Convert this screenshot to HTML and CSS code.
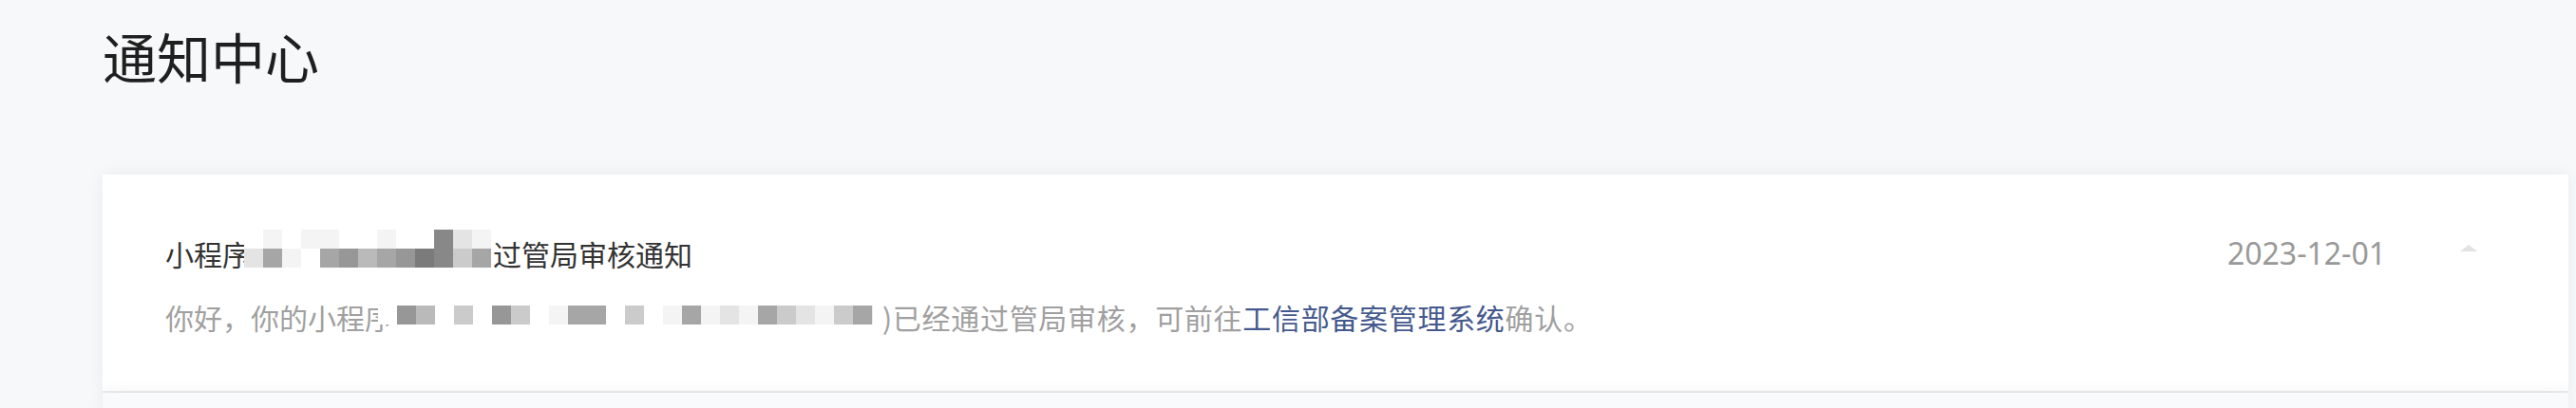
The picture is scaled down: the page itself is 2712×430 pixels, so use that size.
FILE: index.html
```html
<!DOCTYPE html>
<html lang="zh-CN">
<head>
<meta charset="utf-8">
<title>通知中心</title>
<link rel="stylesheet" href="styles.css">
</head>
<body>
<div class="page">
  <h1 class="page-title">通知中心</h1>
  <div class="list">
    <div class="card">
      <div class="card-head">
        <div class="card-title">小程序<span class="mosaic mosaic-title"><i class="g-f"></i><i class="g-e"></i><i class="g-f"></i><i class="g-e"></i><i class="g-e"></i><i class="g-f"></i><i class="g-f"></i><i class="g-e"></i><i class="g-f"></i><i class="g-f"></i><i class="g-8"></i><i class="g-d"></i><i class="g-e"></i><i class="g-d"></i><i class="g-a"></i><i class="g-e"></i><i class="g-f"></i><i class="g-a"></i><i class="g-9"></i><i class="g-b"></i><i class="g-a"></i><i class="g-9"></i><i class="g-7"></i><i class="g-8"></i><i class="g-c"></i><i class="g-a"></i></span>过管局审核通知</div>
        <div class="card-date">2023-12-01</div>
        <span class="caret"></span>
      </div>
      <div class="card-desc">你好，你的小程序<span class="mosaic mosaic-desc"><i class="g-f"></i><i class="g-9"></i><i class="g-b"></i><i class="g-f"></i><i class="g-c"></i><i class="g-f"></i><i class="g-9"></i><i class="g-c"></i><i class="g-f"></i><i class="g-e"></i><i class="g-a"></i><i class="g-a"></i><i class="g-f"></i><i class="g-c"></i><i class="g-f"></i><i class="g-e"></i><i class="g-a"></i><i class="g-e"></i><i class="g-d"></i><i class="g-e"></i><i class="g-a"></i><i class="g-c"></i><i class="g-d"></i><i class="g-e"></i><i class="g-c"></i><i class="g-a"></i></span><span class="desc-tail">)已经通过管局审核，可前往<a class="link" href="#">工信部备案管理系统</a>确认。</span></div>
    </div>
    <div class="card card-next"></div>
  </div>
</div>
</body>
</html>
```

FILE: styles.css
```css
html, body {
  margin: 0;
  padding: 0;
}
body {
  background: #f7f8fa;
  font-family: "Noto Sans CJK SC", "Noto Sans", sans-serif;
  height: 430px;
  overflow: hidden;
}
.page {
  padding: 19px 8px 0 108px;
}
.page-title {
  margin: 0;
  font-size: 57px;
  font-weight: 400;
  line-height: 78px;
  color: #1f1f1f;
}
.list {
  margin-top: 87px;
}
.card {
  background: #fff;
  box-shadow: 0 0 18px rgba(0, 0, 0, 0.06);
  padding: 62px 96px 57px 66px;
  border-bottom: 2px solid #ebecee;
}
.card-next {
  background: #f9fafb;
  height: 60px;
  padding: 0;
  border: none;
}
.card-head {
  display: flex;
  align-items: center;
}
.card-title {
  flex: 1;
  font-size: 30px;
  line-height: 42px;
  height: 42px;
  color: #333;
  white-space: nowrap;
}
.card-date {
  font-family: "Noto Sans", sans-serif;
  font-size: 32px;
  line-height: 42px;
  color: #999;
}
.caret {
  width: 0;
  height: 0;
  margin-left: 78px;
  margin-bottom: 12px;
  border-left: 9px solid transparent;
  border-right: 9px solid transparent;
  border-bottom: 7px solid #e2e2e2;
}
.card-desc {
  margin-top: 25px;
  font-size: 30px;
  line-height: 42px;
  height: 42px;
  color: #a0a0a0;
  white-space: nowrap;
}
.desc-tail {
  letter-spacing: 0.7px;
}
.link {
  color: #45598e;
  text-decoration: none;
}
.mosaic {
  display: inline-block;
  overflow: hidden;
  font-size: 0;
  line-height: 0;
  white-space: normal;
}
.mosaic i {
  display: inline-block;
  vertical-align: top;
  width: 20px;
  height: 20px;
}
.mosaic-title {
  width: 260px;
  height: 40px;
  margin: -10px 2px 0 -7px;
  vertical-align: -2px;
}
.mosaic-desc {
  width: 520px;
  height: 20px;
  margin-left: -16px;
  margin-right: 10px;
  vertical-align: 5px;
  border-right: 1px solid #ececec;
}
.g-f { background: #ffffff; }
.g-e { background: #f4f4f4; }
.g-d { background: #e4e4e4; }
.g-c { background: #cbcbcb; }
.g-b { background: #bababa; }
.g-a { background: #a6a6a6; }
.g-9 { background: #979797; }
.g-8 { background: #888888; }
.g-7 { background: #7b7b7b; }
```
